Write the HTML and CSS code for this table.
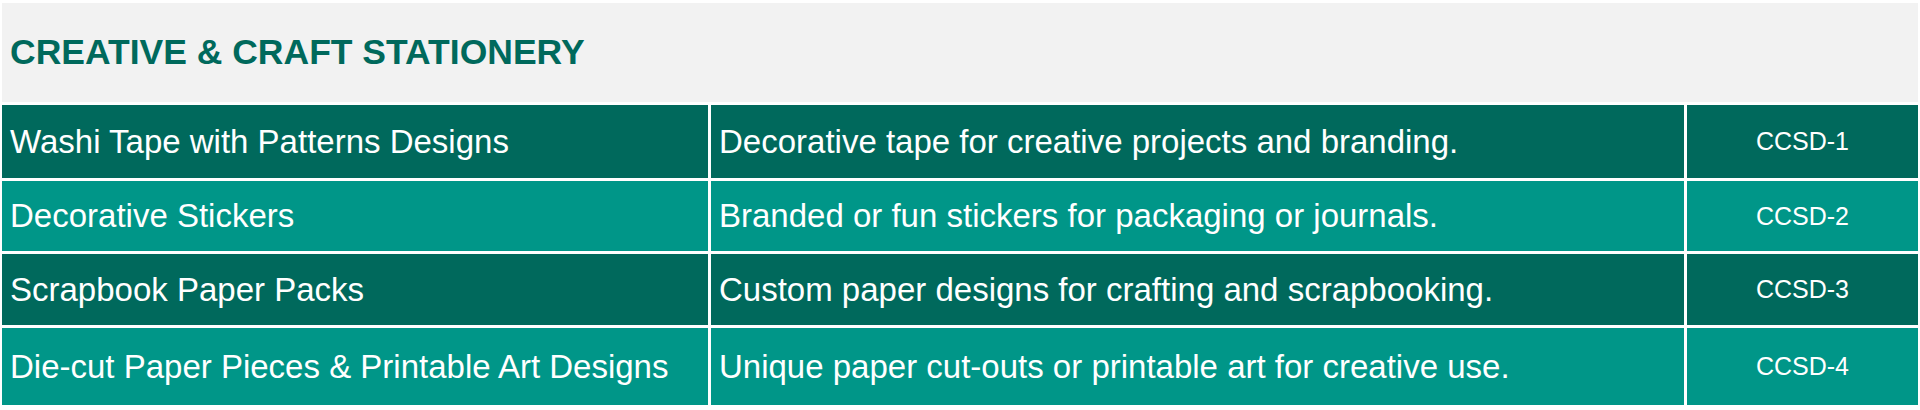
FILE: index.html
```html
<!DOCTYPE html>
<html>
<head>
<meta charset="utf-8">
<link rel="stylesheet" href="styles.css">
</head>
<body>
<div class="sheet">
  <div class="title">CREATIVE &amp; CRAFT STATIONERY</div>

  <div class="cell name dark">Washi Tape with Patterns Designs</div>
  <div class="cell desc dark">Decorative tape for creative projects and branding.</div>
  <div class="cell code dark">CCSD-1</div>

  <div class="cell name light">Decorative Stickers</div>
  <div class="cell desc light">Branded or fun stickers for packaging or journals.</div>
  <div class="cell code light">CCSD-2</div>

  <div class="cell name dark">Scrapbook Paper Packs</div>
  <div class="cell desc dark">Custom paper designs for crafting and scrapbooking.</div>
  <div class="cell code dark">CCSD-3</div>

  <div class="cell name light">Die-cut Paper Pieces &amp; Printable Art Designs</div>
  <div class="cell desc light">Unique paper cut-outs or printable art for creative use.</div>
  <div class="cell code light">CCSD-4</div>
</div>
</body>
</html>
```

FILE: styles.css
```css
html, body {
  margin: 0;
  padding: 0;
  background: #ffffff;
}

body {
  font-family: "Liberation Sans", Arial, sans-serif;
}

.sheet {
  padding: 3px 2px 0 2px;
  display: grid;
  grid-template-columns: 706px 973px 1fr;
  grid-template-rows: 99px 73px 70px 71px 77px;
  gap: 3px;
}

.title {
  grid-column: 1 / 4;
  background: #f2f2f2;
  color: #00695c;
  font-weight: bold;
  font-size: 35.5px;
  display: flex;
  align-items: center;
  padding-left: 8px;
  padding-bottom: 1px;
}

.cell {
  display: flex;
  align-items: center;
  color: #ffffff;
  font-size: 33px;
  white-space: nowrap;
  overflow: hidden;
}

.name, .desc {
  padding-left: 8px;
}

.code {
  justify-content: center;
  font-size: 25px;
}

.dark {
  background: #00695c;
}

.light {
  background: #009688;
}
```
